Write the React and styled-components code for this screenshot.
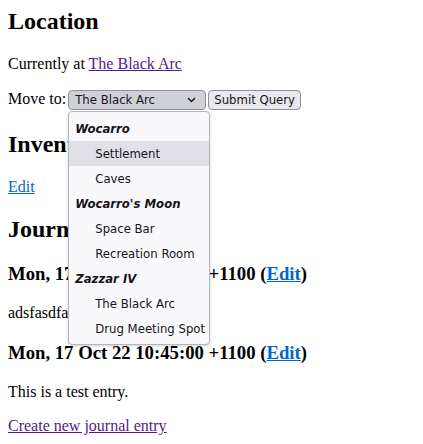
import React from "react";
import styled, { createGlobalStyle } from "styled-components";

const GlobalStyle = createGlobalStyle`
  html, body { background: #ffffff; }
  body {
    margin: 8px;
    font-family: "Liberation Serif", "Times New Roman", serif;
    font-size: 16px;
    color: #000;
  }
`;

const Page = styled.main`
  display: block;
`;

const H2 = styled.h2`
  font-size: 24px;
  font-weight: bold;
  margin: ${(p) => (p.$first ? "0" : "19.92px")} 0 19.92px;
`;

const H3 = styled.h3`
  font-size: 18.72px;
  font-weight: bold;
  margin: 19.5px 0;
`;

const P = styled.p`
  margin: 16px 0;
`;

const Link = styled.a`
  color: ${(p) => (p.$visited ? "#551a8b" : "#0066cc")};
  text-decoration: underline;
  cursor: pointer;
`;

const widgetFont = `"DejaVu Sans Condensed", "DejaVu Sans", Tahoma, sans-serif`;

const SelectWrap = styled.span`
  position: relative;
  display: inline-block;
  vertical-align: baseline;
  margin: 1px 0 1px 2px;
`;

const SelectBox = styled.span`
  display: inline-flex;
  align-items: center;
  justify-content: space-between;
  box-sizing: border-box;
  width: 138px;
  height: 20px;
  padding: 0 6px;
  border: 1px solid #8f8f9d;
  border-radius: 4px;
  background: #d0d0d7;
  color: #15141a;
  font-family: ${widgetFont};
  font-size: 13px;
  line-height: 18px;
`;

const Chevron = styled.svg`
  width: 9px;
  height: 6px;
  margin-right: 3px;
  flex: none;
`;

const Popup = styled.div`
  position: absolute;
  left: 0;
  top: 21px;
  z-index: 10;
  box-sizing: border-box;
  width: 142px;
  padding: 4px 0 3px;
  border: 1px solid #b6b6be;
  border-radius: 4px;
  background: #f9f9fb;
  box-shadow: 0 1px 3px rgba(0, 0, 0, 0.18);
  font-family: ${widgetFont};
  font-size: 13px;
  color: #15141a;
`;

const GroupLabel = styled.div`
  height: 25px;
  line-height: 25px;
  padding-left: 6px;
  font-weight: bold;
  font-style: italic;
  white-space: nowrap;
`;

const Option = styled.div`
  height: 25px;
  line-height: 25px;
  padding-left: 26px;
  white-space: nowrap;
  background: ${(p) => (p.$hover ? "#e0e0e6" : "transparent")};
`;

const Button = styled.button`
  box-sizing: border-box;
  height: 20px;
  margin: 1px 0 1px 2px;
  padding: 0 5px;
  border: 1px solid #8f8f9d;
  border-radius: 4px;
  background: #e9e9ed;
  color: #15141a;
  font-family: ${widgetFont};
  font-size: 13px;
  line-height: 18px;
  vertical-align: baseline;
`;

const groups = [
  { name: "Wocarro", options: ["Settlement", "Caves"] },
  { name: "Wocarro's Moon", options: ["Space Bar", "Recreation Room"] },
  { name: "Zazzar IV", options: ["The Black Arc", "Drug Meeting Spot"] },
];

const entries = [
  { date: "Mon, 17 Oct 22 10:44:00 +1100", text: "adsfasdfasdf" },
  { date: "Mon, 17 Oct 22 10:45:00 +1100", text: "This is a test entry." },
];

export default function App() {
  return (
    <Page>
      <GlobalStyle />
      <H2 $first>Location</H2>
      <P>
        Currently at <Link $visited>The Black Arc</Link>
      </P>
      <P>
        Move to:
        <SelectWrap>
          <SelectBox>
            <span>The Black Arc</span>
            <Chevron viewBox="0 0 9 6">
              <path d="M1 1 L4.5 4.5 L8 1" fill="none" stroke="#15141a" strokeWidth="1.4" />
            </Chevron>
          </SelectBox>
          <Popup>
            {groups.map((g) => (
              <React.Fragment key={g.name}>
                <GroupLabel>{g.name}</GroupLabel>
                {g.options.map((o) => (
                  <Option key={o} $hover={o === "Settlement"}>
                    {o}
                  </Option>
                ))}
              </React.Fragment>
            ))}
          </Popup>
        </SelectWrap>
        <Button type="button">Submit Query</Button>
      </P>
      <H2>Inventory</H2>
      <P>
        <Link>Edit</Link>
      </P>
      <H2>Journal</H2>
      {entries.map((e) => (
        <React.Fragment key={e.date}>
          <H3>
            {e.date} (<Link>Edit</Link>)
          </H3>
          <P>{e.text}</P>
        </React.Fragment>
      ))}
      <P>
        <Link $visited>Create new journal entry</Link>
      </P>
    </Page>
  );
}
